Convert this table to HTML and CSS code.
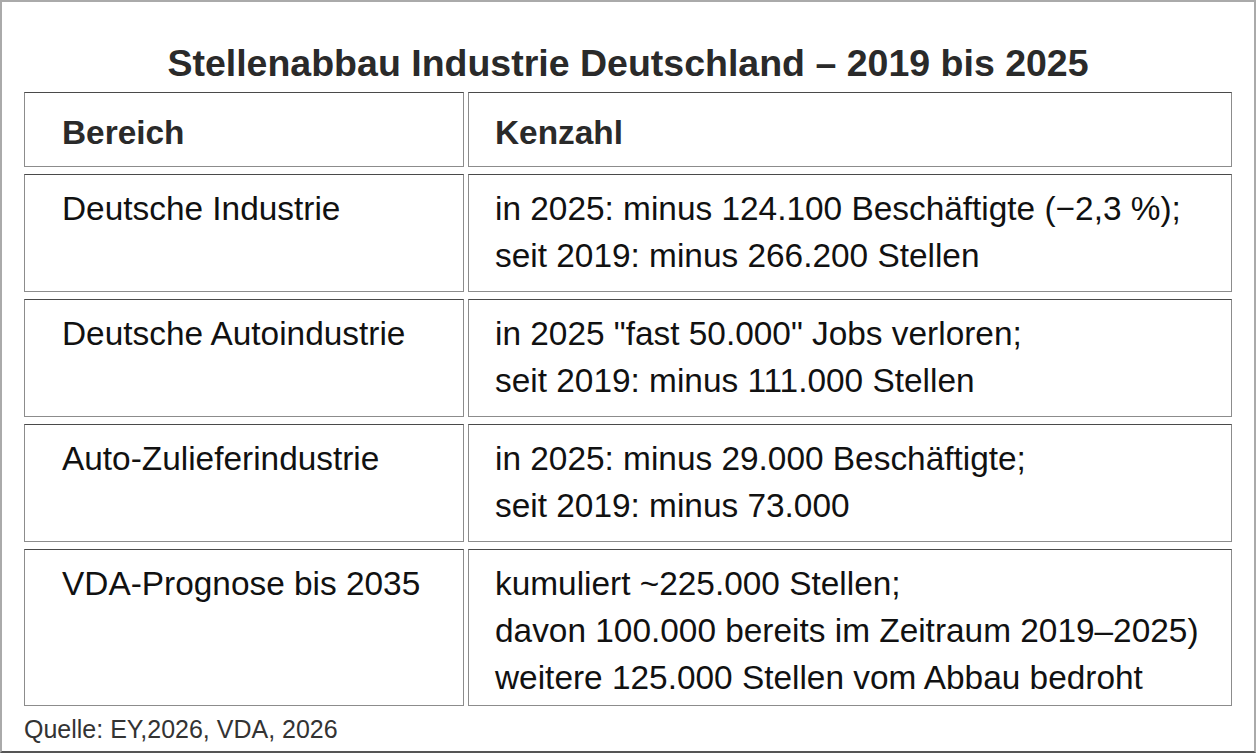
FILE: index.html
```html
<!DOCTYPE html>
<html lang="de">
<head>
<meta charset="utf-8">
<title>Stellenabbau Industrie Deutschland</title>
<link rel="stylesheet" href="styles.css">
</head>
<body>
<div class="frame">
  <h1 class="title">Stellenabbau Industrie Deutschland – 2019 bis 2025</h1>
  <table class="data">
    <thead>
      <tr class="head-row"><th class="c1">Bereich</th><th class="c2">Kenzahl</th></tr>
    </thead>
    <tbody>
      <tr class="row"><td class="c1">Deutsche Industrie</td><td class="c2">in 2025: minus 124.100 Beschäftigte (−2,3 %);<br>seit 2019: minus 266.200 Stellen</td></tr>
      <tr class="row"><td class="c1">Deutsche Autoindustrie</td><td class="c2">in 2025 "fast 50.000" Jobs verloren;<br>seit 2019: minus 111.000 Stellen</td></tr>
      <tr class="row"><td class="c1">Auto-Zulieferindustrie</td><td class="c2">in 2025: minus 29.000 Beschäftigte;<br>seit 2019: minus 73.000</td></tr>
      <tr class="row"><td class="c1">VDA-Prognose bis 2035</td><td class="c2">kumuliert ~225.000 Stellen;<br>davon 100.000 bereits im Zeitraum 2019–2025)<br>weitere 125.000 Stellen vom Abbau bedroht</td></tr>
    </tbody>
  </table>
  <p class="source">Quelle: EY,2026, VDA, 2026</p>
</div>
</body>
</html>
```

FILE: styles.css
```css
html, body {
  margin: 0;
  padding: 0;
  background: #ffffff;
}

body {
  font-family: "Liberation Sans", Arial, sans-serif;
  color: #111111;
}

.frame {
  box-sizing: border-box;
  width: 1256px;
  height: 753px;
  border: 2px solid #aaaaaa;
  border-bottom-color: #555555;
  padding: 40px 18px 0;
  background: #ffffff;
}

.title {
  margin: 0;
  font-size: 37.5px;
  line-height: 43px;
  font-weight: bold;
  text-align: center;
  color: #2a2a2a;
}

.data {
  border-collapse: separate;
  border-spacing: 4px 7px;
  width: 1216px;
  margin: 0;
  font-size: 33.4px;
  line-height: 47px;
}

.data th,
.data td {
  border: 1px solid #8c8c8c;
  border-top-color: #4a4a4a;
  vertical-align: top;
  text-align: left;
  white-space: nowrap;
}

.data th {
  font-weight: bold;
  color: #2a2a2a;
  padding-top: 16px;
  padding-bottom: 9px;
}

.data td {
  font-weight: normal;
  color: #111111;
  padding-top: 10px;
  padding-bottom: 4px;
}

.data .c1 {
  width: 401px;
  padding-left: 37px;
  padding-right: 0;
}

.data .c2 {
  padding-left: 26px;
  padding-right: 10px;
}

.head-row {
  height: 75px;
}

.row {
  height: 118px;
}

.source {
  margin: 0;
  padding-left: 4px;
  font-size: 25px;
  line-height: 32px;
  color: #333333;
}
```
